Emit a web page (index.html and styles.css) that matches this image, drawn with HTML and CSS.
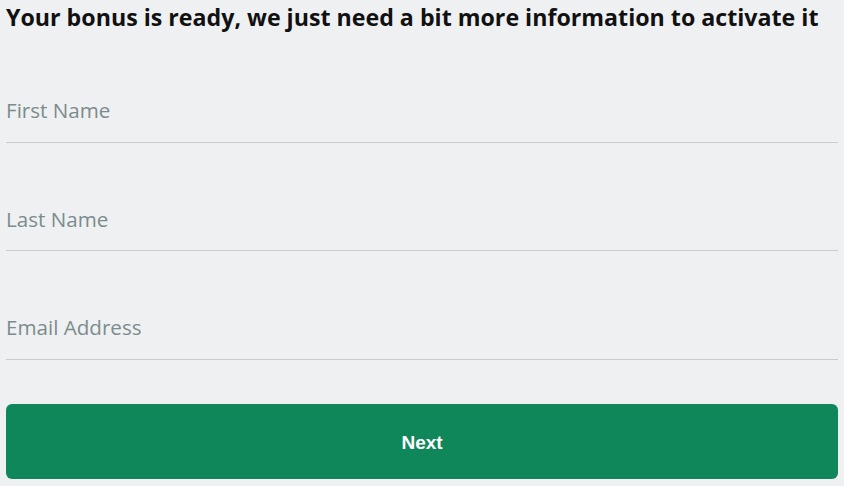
FILE: index.html
```html
<!DOCTYPE html>
<html>
<head>
<meta charset="utf-8">
<link rel="stylesheet" href="styles.css">
</head>
<body>
<div class="page">
  <h1 class="title">Your bonus is ready, we just need a bit more information to activate it</h1>
  <form class="form">
    <div class="field"><input class="input" type="text" placeholder="First Name"></div>
    <div class="field"><input class="input" type="text" placeholder="Last Name"></div>
    <div class="field"><input class="input" type="email" placeholder="Email Address"></div>
    <button class="btn" type="button">Next</button>
  </form>
</div>
</body>
</html>
```
FILE: styles.css
```css
html, body {
  margin: 0;
  padding: 0;
  background: #eff0f2;
}
.page {
  padding: 0 6px;
  font-family: "Open Sans", "Noto Sans", sans-serif;
}
.title {
  margin: 0;
  font-size: 23.2px;
  line-height: 34px;
  font-weight: 700;
  color: #111;
  white-space: nowrap;
}
.form {
  display: flex;
  flex-direction: column;
}
.field {
  padding-top: 44.5px;
  border-bottom: 1px solid #c8cccf;
}
.input {
  display: block;
  width: 100%;
  box-sizing: border-box;
  height: 63px;
  border: 0;
  padding: 0;
  background: transparent;
  font-family: "Open Sans", "Noto Sans", sans-serif;
  font-size: 20.6px;
  color: #333;
  outline: none;
}
.input::placeholder {
  color: #7b8c8c;
}
.btn {
  margin-top: 44px;
  height: 75px;
  padding: 4px 0 0;
  border: 0;
  border-radius: 6px;
  background: #10875a;
  color: #fff;
  font-family: "Liberation Sans", Arial, sans-serif;
  font-weight: 700;
  font-size: 19px;
}
```
